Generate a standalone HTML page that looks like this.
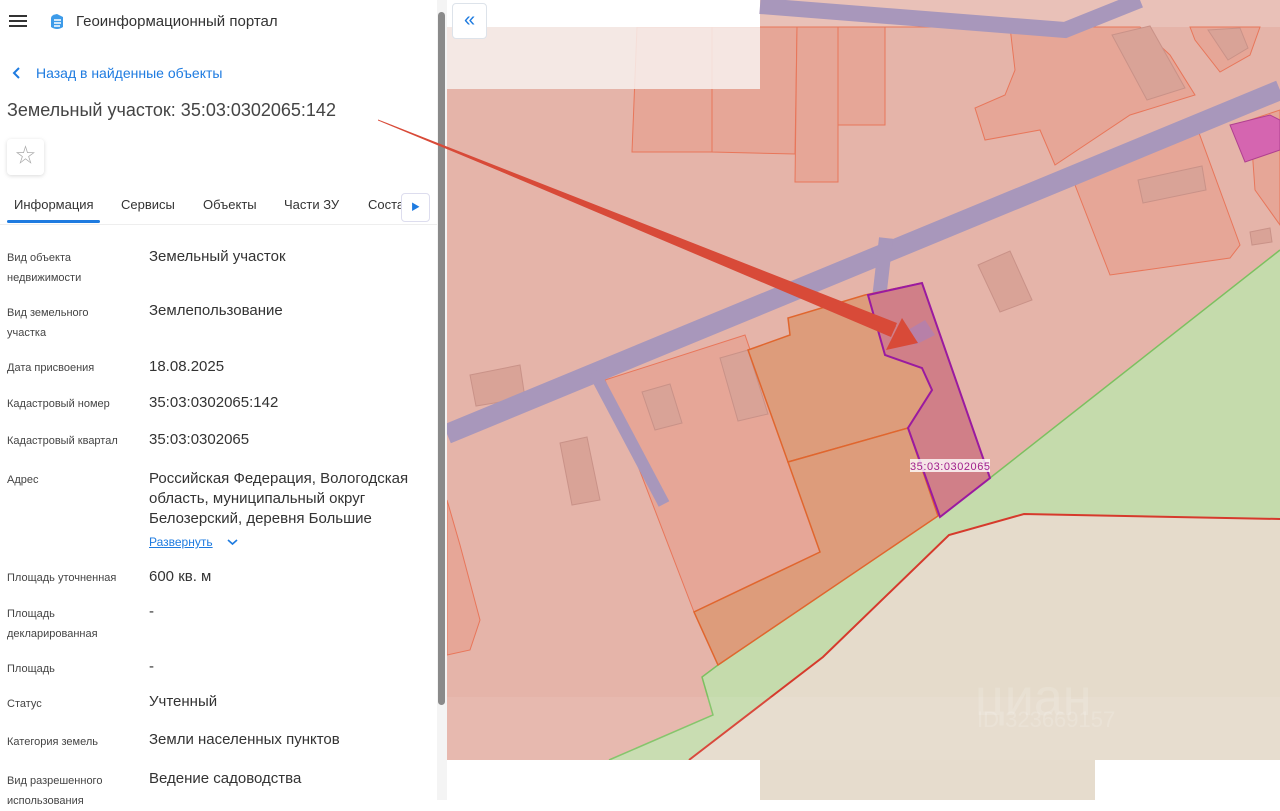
<!DOCTYPE html>
<html><head><meta charset="utf-8"><style>
*{margin:0;padding:0;box-sizing:border-box}
body{width:1280px;height:800px;overflow:hidden;position:relative;background:#fff;font-family:"Liberation Sans","Noto Sans CJK SC",sans-serif;color:#333}
.abs{position:absolute}
.lbl{position:absolute;left:7px;font-size:11px;line-height:20px;color:#444;width:130px}
.val{position:absolute;left:149px;font-size:15px;line-height:20px;color:#333;width:280px}
</style></head><body>
<svg class="abs" style="left:0;top:0" width="1280" height="800" viewBox="0 0 1280 800">
<rect x="447" y="0" width="833" height="800" fill="#e5b4a9"/>
<rect x="760" y="0" width="520" height="27" fill="#e9c1b8"/>
<g fill="#e6a697" stroke="#e8765a" stroke-width="1">
<polygon points="637,27 712,27 712,152 632,152"/>
<polygon points="712,27 797,27 795,154 712,152"/>
<polygon points="797,27 838,27 838,182 795,182"/>
<polygon points="838,27 885,27 885,125 838,125"/>
<polygon points="885,27 1010,27 1015,70 1005,95 975,108 985,140 1040,130 1055,165 1130,115 1195,95 1170,55 1140,27"/>
<polygon points="1190,27 1260,27 1250,55 1220,72 1195,40"/>
<polygon points="1075,185 1195,122 1240,245 1230,258 1110,275"/>
<polygon points="1250,120 1280,110 1280,225 1255,190"/>
<polygon points="447,500 460,545 480,620 470,650 447,655"/>
<polygon points="605,380 745,335 820,552 694,612"/>
</g>
<rect x="447" y="27" width="313" height="62" fill="#f7f1ef" opacity="0.85"/>
<rect x="447" y="0" width="313" height="27" fill="#fff"/>
<g fill="#d9a397" stroke="#c99288" stroke-width="1">
<polygon points="1112,35 1150,26 1185,88 1147,100"/>
<polygon points="1208,30 1240,28 1248,48 1228,60"/>
<polygon points="1138,180 1202,166 1206,190 1143,203"/>
<polygon points="1250,232 1270,228 1272,242 1252,245"/>
<polygon points="978,265 1010,251 1032,300 1000,312"/>
<polygon points="805,325 843,312 866,366 832,380"/>
<polygon points="720,358 748,350 768,414 738,421"/>
<polygon points="642,392 670,384 682,423 655,430"/>
<polygon points="470,375 520,365 525,398 476,406"/>
<polygon points="560,443 587,437 600,500 572,505"/>
</g>
<g stroke="#a897bb" fill="none">
<polyline points="760,6 1065,30 1140,0" stroke-width="16"/>
<line x1="447" y1="434" x2="1280" y2="90" stroke-width="20"/>
<line x1="594" y1="372" x2="664" y2="504" stroke-width="12"/>
<line x1="886" y1="238" x2="872" y2="360" stroke-width="14"/>
</g>
<polygon points="1230,125 1270,115 1280,120 1280,150 1245,162" fill="#d565b0" stroke="#b04090"/>
<polygon points="1280,250 990,478 935,517 718,665 702,677 713,715 609,760 1280,760" fill="#c5dbac"/>
<polyline points="1280,250 990,478 935,517 718,665 702,677 713,715 609,760" fill="none" stroke="#7cc060" stroke-width="1.5"/>
<polygon points="1280,519 1024,514 949,535 823,657 689,760 1280,760" fill="#e5dbcb"/>
<polyline points="1280,519 1024,514 949,535 823,657 689,760" fill="none" stroke="#d63a2c" stroke-width="2"/>
<g fill="#dd9c7b" stroke="#e0662e" stroke-width="1.5">
<polygon points="748,350 790,335 788,318 865,295 922,283 932,390 908,428 788,462"/>
<polygon points="788,462 908,428 938,516 718,665 694,612 820,552"/>
</g>
<polygon points="868,295 922,283 990,478 940,517 908,428 932,390 922,368 885,355" fill="#d07f88" stroke="#9a1aa0" stroke-width="2"/>
<polygon points="908,330 925,320 935,335 915,345" fill="#b780a8"/>
<rect x="447" y="697" width="833" height="63" fill="#fff" opacity="0.08"/>
<rect x="447" y="760" width="313" height="40" fill="#fff"/>
<rect x="760" y="760" width="335" height="40" fill="#e6dccd"/>
<rect x="1095" y="760" width="185" height="40" fill="#fff"/>
<rect x="910" y="459" width="80" height="13" fill="#fff" opacity="0.8"/>
<text x="910" y="470" font-family="Liberation Sans,sans-serif" font-size="11" fill="#a0208c" textLength="80">35:03:0302065</text>
<text x="975" y="715" font-family="Liberation Sans,sans-serif" font-size="52" fill="#fff" opacity="0.15">циан</text>
<text x="977" y="727" font-family="Liberation Sans,sans-serif" font-size="22" fill="#fff" opacity="0.15">ID 323669157</text>
</svg>
<div class="abs" style="left:0;top:0;width:437px;height:800px;background:#fff"></div>
<div class="abs" style="left:437px;top:0;width:10px;height:800px;background:#f4f4f4"></div>
<div class="abs" style="left:438px;top:12px;width:7px;height:693px;background:#8a8a8a;border-radius:4px"></div>
<div class="abs" style="left:9px;top:15px;width:18px;height:2px;background:#333;box-shadow:0 5px 0 #333,0 10px 0 #333"></div>
<svg class="abs" style="left:49px;top:13px" width="16" height="18" viewBox="0 0 16 18"><path d="M8 1 L14 4 V14 Q8 18 2 14 V5 Q2 2 8 1Z" fill="#3d9be9"/><path d="M5 7h7M5 10h7M5 13h6" stroke="#fff" stroke-width="1.4"/></svg>
<div class="abs" style="left:76px;top:13px;font-size:15px;color:#333">Геоинформационный портал</div>
<svg class="abs" style="left:12px;top:67px" width="10" height="12" viewBox="0 0 10 12"><path d="M7 1 L2 6 L7 11" stroke="#1e7be0" stroke-width="2" fill="none"/></svg>
<div class="abs" style="left:36px;top:65px;font-size:14px;color:#1e7be0">Назад в найденные объекты</div>
<div class="abs" style="left:7px;top:100px;font-size:18px;color:#444">Земельный участок: 35:03:0302065:142</div>
<div class="abs" style="left:7px;top:139px;width:37px;height:36px;border-radius:4px;box-shadow:0 1px 4px rgba(0,0,0,.15);text-align:center;line-height:35px;color:#aaa;font-size:20px">☆</div>
<div class="abs" style="left:14px;top:197px;font-size:13px;color:#333">Информация</div>
<div class="abs" style="left:7px;top:220px;width:93px;height:3px;background:#1e7be0;border-radius:2px"></div>
<div class="abs" style="left:121px;top:197px;font-size:13px;color:#333">Сервисы</div>
<div class="abs" style="left:203px;top:197px;font-size:13px;color:#333">Объекты</div>
<div class="abs" style="left:284px;top:197px;font-size:13px;color:#333">Части ЗУ</div>
<div class="abs" style="left:368px;top:197px;font-size:13px;color:#333">Соста</div>
<div class="abs" style="left:401px;top:193px;width:29px;height:29px;background:#fff;border:1px solid #dde;border-radius:4px;color:#1e7be0;font-size:9px;text-align:center;line-height:27px">▶</div>
<div class="abs" style="left:0;top:224px;width:437px;height:1px;background:#eee"></div>
<div class="lbl" style="top:248px">Вид объекта<br>недвижимости</div><div class="val" style="top:247px">Земельный участок</div>
<div class="lbl" style="top:303px">Вид земельного<br>участка</div><div class="val" style="top:301px">Землепользование</div>
<div class="lbl" style="top:358px">Дата присвоения</div><div class="val" style="top:357px">18.08.2025</div>
<div class="lbl" style="top:394px">Кадастровый номер</div><div class="val" style="top:393px">35:03:0302065:142</div>
<div class="lbl" style="top:431px">Кадастровый квартал</div><div class="val" style="top:430px">35:03:0302065</div>
<div class="lbl" style="top:470px">Адрес</div><div class="val" style="top:469px">Российская Федерация, Вологодская область, муниципальный округ Белозерский, деревня Большие</div>
<div class="abs" style="left:149px;top:535px;font-size:12px;color:#1e7be0;text-decoration:underline">Развернуть</div>
<svg class="abs" style="left:227px;top:538px" width="11" height="8" viewBox="0 0 11 8"><path d="M1 2 L5.5 6 L10 2" stroke="#1e7be0" stroke-width="1.6" fill="none"/></svg>
<div class="lbl" style="top:568px">Площадь уточненная</div><div class="val" style="top:567px">600 кв. м</div>
<div class="lbl" style="top:604px">Площадь<br>декларированная</div><div class="val" style="top:602px">-</div>
<div class="lbl" style="top:659px">Площадь</div><div class="val" style="top:657px">-</div>
<div class="lbl" style="top:694px">Статус</div><div class="val" style="top:692px">Учтенный</div>
<div class="lbl" style="top:732px">Категория земель</div><div class="val" style="top:730px">Земли населенных пунктов</div>
<div class="lbl" style="top:771px">Вид разрешенного<br>использования</div><div class="val" style="top:769px">Ведение садоводства</div>
<div class="abs" style="left:452px;top:3px;width:35px;height:36px;background:#fff;border:1px solid #dde3ea;border-radius:4px;color:#1e7be0;font-size:20px;text-align:center;line-height:32px">«</div>
<svg class="abs" style="left:0;top:0;pointer-events:none" width="1280" height="800" viewBox="0 0 1280 800">
<polygon points="378,119.5 896,326 892,334 378,120.5" fill="#d84a38"/>
<polygon points="378,119.5 897,323 891,337" fill="#d84a38"/>
<polygon points="902,318 918,343 886,350" fill="#d84a38"/>
</svg>
</body></html>
